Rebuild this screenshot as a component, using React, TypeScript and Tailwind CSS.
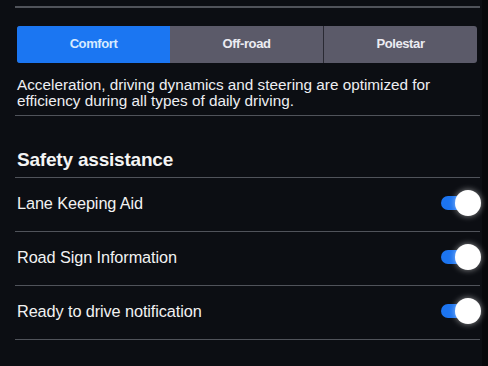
import React from 'react';

const font = { fontFamily: '"Liberation Sans", Arial, sans-serif' };

const Toggle: React.FC = () => (
  <div className="relative w-[40px] h-[26px] -mr-[1px]">
    <div className="absolute left-0 top-[6px] w-[30px] h-[14px] rounded-full bg-[#1c74f0]" />
    <div className="absolute right-0 top-0 w-[26px] h-[26px] rounded-full bg-white shadow-[0_0_6px_rgba(255,255,255,0.55)]" />
  </div>
);

const SettingRow: React.FC<{ label: string }> = ({ label }) => (
  <div className="h-[54px] flex items-center justify-between border-b-[1.5px] border-[#50535a] pl-[2px] pb-[3px]">
    <span className="text-[16.3px] text-[#f2f2f2] tracking-[-0.1px]">{label}</span>
    <Toggle />
  </div>
);

export default function App() {
  const modes = ['Comfort', 'Off-road', 'Polestar'];
  return (
    <div className="w-[488px] h-[366px] overflow-hidden bg-[#0c0e13] flex" style={font}>
      <div className="flex-1 pl-[15px] pr-[2px] pt-[6px]">
        {/* top divider */}
        <div className="h-[1.5px] bg-[#50535a]" />

        {/* drive mode segments */}
        <div className="mt-[18px] ml-[2px] mr-[3px] h-[37px] flex rounded-[3px] overflow-hidden bg-[#5b5a69]">
          {modes.map((m, i) => (
            <div
              key={m}
              className={`flex-1 flex items-center justify-center text-[13px] font-bold tracking-[-0.4px] ${
                i === 0 ? 'bg-[#1b76f2] text-[#d6eaff]' : 'text-[#ececf2]'
              } ${i === 2 ? 'border-l border-[#2a2a33]' : ''}`}
            >
              {m}
            </div>
          ))}
        </div>

        {/* description */}
        <p className="mt-[14px] ml-[2px] text-[15.3px] leading-[16px] text-[#eeeef2]">
          Acceleration, driving dynamics and steering are optimized for
          <br />
          efficiency during all types of daily driving.
        </p>

        <div className="mt-[6px] h-[1.5px] bg-[#50535a]" />

        {/* section */}
        <div className="h-[62px] flex items-end pb-[3px] pl-[2px] border-b-[1.5px] border-[#50535a]">
          <h2 className="text-[19px] font-bold text-[#f4f4f4] tracking-[-0.2px]">Safety assistance</h2>
        </div>

        <SettingRow label="Lane Keeping Aid" />
        <SettingRow label="Road Sign Information" />
        <SettingRow label="Ready to drive notification" />
      </div>
      <div className="w-[6px] bg-[#07080b]" />
    </div>
  );
}
